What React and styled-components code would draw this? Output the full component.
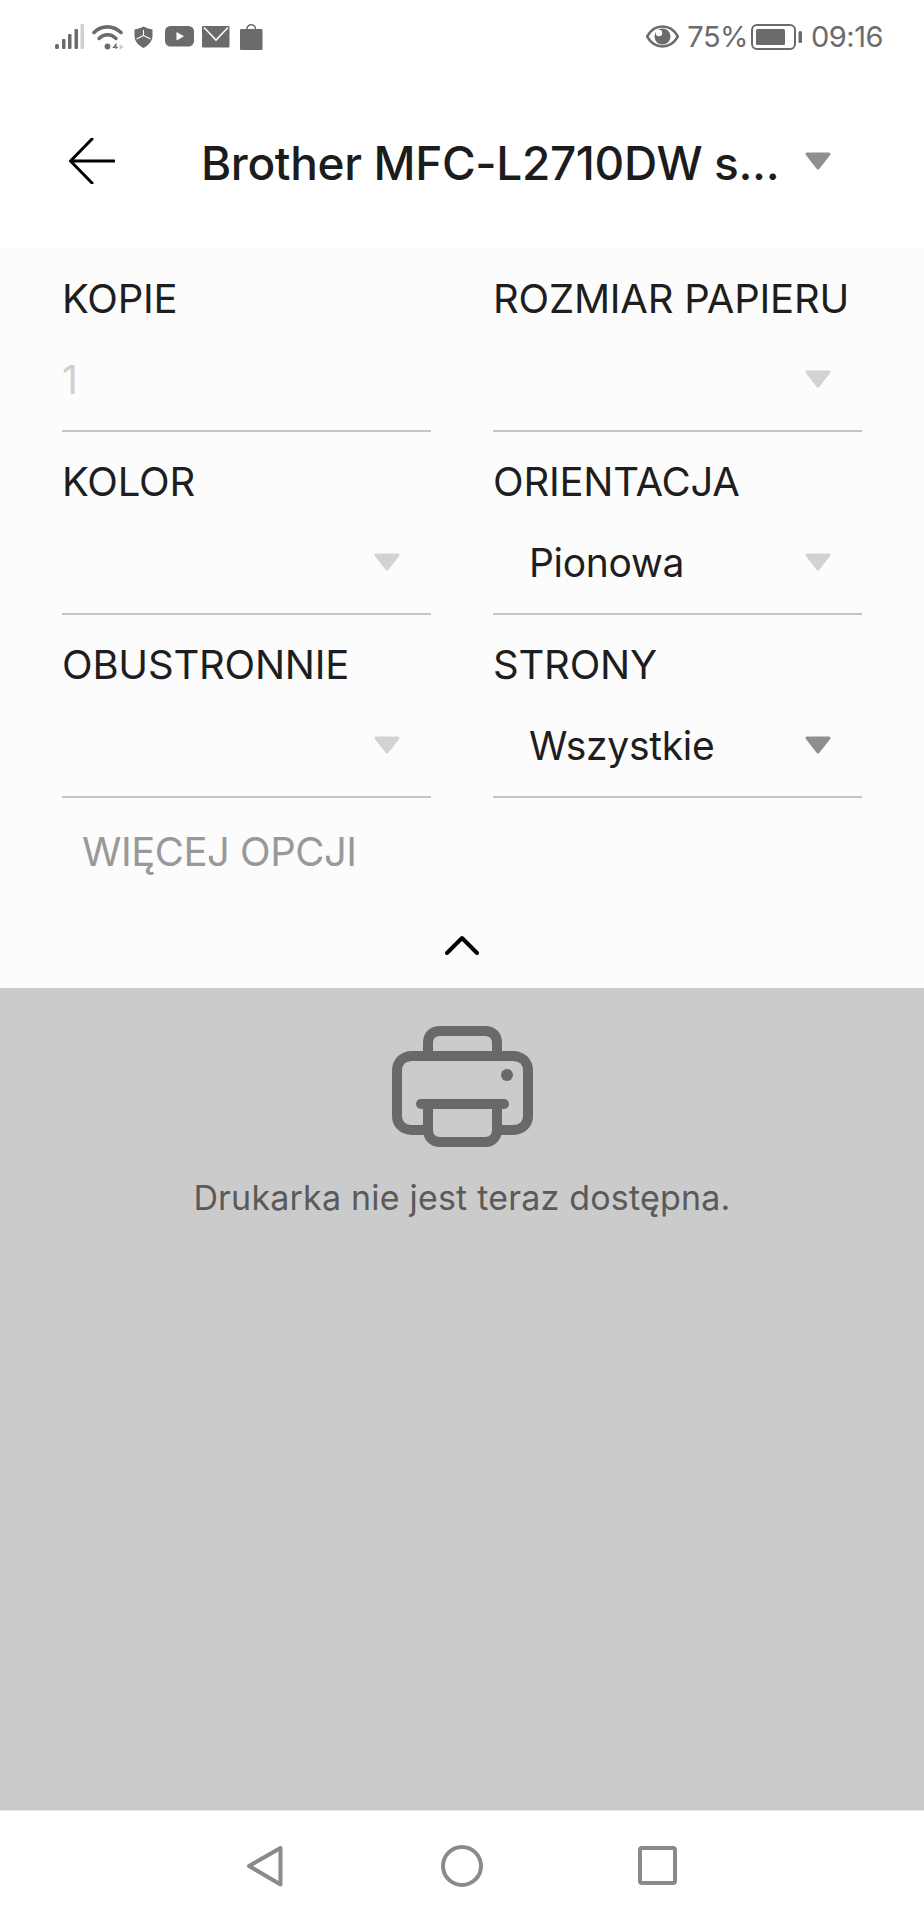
import React from 'react';
import styled, { createGlobalStyle } from 'styled-components';

const GlobalStyle = createGlobalStyle`
  html, body {
    margin: 0;
    padding: 0;
    background: #fff;
    font-family: 'Inter', 'Liberation Sans', sans-serif;
  }
`;

const Screen = styled.div`
  width: 924px;
  height: 1920px;
  display: flex;
  flex-direction: column;
  overflow: hidden;
`;

// status bar
const StatusBar = styled.div`
  height: 70px;
  flex: none;
  display: flex;
  align-items: center;
  justify-content: space-between;
  padding: 3px 41px 0 55px;
  box-sizing: border-box;
  color: #6b6b6b;
`;

const StatusGroup = styled.div`
  display: flex;
  align-items: center;
`;

const StatusGap = styled.span`
  width: ${props => props.width}px;
  flex: none;
`;

const StatusText = styled.span`
  font-size: 29px;
  letter-spacing: -0.5px;
  line-height: 1;
`;

// header
const Header = styled.div`
  height: 178px;
  flex: none;
  display: flex;
  align-items: center;
  padding: 4px 0 0 69px;
  box-sizing: border-box;
`;

const Title = styled.div`
  font-size: 46px;
  font-weight: 500;
  color: #1c1c1c;
  letter-spacing: -0.35px;
  margin: 4px 0 0 86px;
  width: 603px;
  white-space: nowrap;
`;

const ArrowMark = styled.svg`
  display: block;
  flex: none;
`;

const Arrow = ({ color = '#d2d2d2' }) => (
  <ArrowMark width="28" height="20" viewBox="0 0 28 20">
    <path d="M3 3H25L14 17Z" fill={color} stroke={color} strokeWidth="3" strokeLinejoin="round" />
  </ArrowMark>
);

// options panel
const Panel = styled.div`
  height: 740px;
  flex: none;
  background: #fcfcfc;
  padding: 1px 62px 0;
  box-sizing: border-box;
  display: flex;
  flex-direction: column;
`;

const Grid = styled.div`
  display: grid;
  grid-template-columns: 369px 369px;
  column-gap: 62px;
  grid-auto-rows: 183px;
`;

const Field = styled.div`
  display: flex;
  flex-direction: column;
  border-bottom: 2px solid #c4c4c4;
  box-sizing: border-box;
`;

const Label = styled.div`
  height: 42px;
  margin-top: 29px;
  line-height: 42px;
  font-size: 40px;
  color: #1e1e1e;
  letter-spacing: -0.2px;
  white-space: nowrap;
`;

const ValueRow = styled.div`
  margin-top: 37px;
  height: 44px;
  display: flex;
  align-items: center;
  justify-content: space-between;
  padding: 0 30px 0 ${props => (props.plain ? 0 : 36)}px;
`;

const Value = styled.span`
  font-size: 39px;
  letter-spacing: -0.3px;
  color: ${props => props.color || '#1e1e1e'};
`;

const MoreOptions = styled.div`
  margin: 31px 0 0 20px;
  height: 46px;
  line-height: 46px;
  font-size: 40px;
  color: #999;
  letter-spacing: -0.5px;
`;

const Collapse = styled.div`
  margin-top: 60px;
  display: flex;
  justify-content: center;
`;

// preview area
const Preview = styled.div`
  flex: 1;
  background: #cbcbcb;
  display: flex;
  flex-direction: column;
  align-items: center;
  padding-top: 38px;
`;

const Message = styled.div`
  margin-top: 30px;
  font-size: 34px;
  letter-spacing: 0.2px;
  color: #5a5a5a;
`;

// navigation bar
const NavBar = styled.div`
  height: 110px;
  flex: none;
  display: flex;
  align-items: center;
  padding-left: 246px;
  background: #fff;
  border-top: 1px solid #e8e8e8;
  box-sizing: border-box;
`;

const NavSpacer = styled.span`
  width: ${props => props.width}px;
  flex: none;
`;

const FIELDS = [
  { label: 'KOPIE', value: '1', plain: true, valueColor: '#cfcfcf' },
  { label: 'ROZMIAR PAPIERU' },
  { label: 'KOLOR' },
  { label: 'ORIENTACJA', value: 'Pionowa' },
  { label: 'OBUSTRONNIE' },
  { label: 'STRONY', value: 'Wszystkie', arrow: '#8f8f8f' }
];

const Icons = {
  Signal: () => (
    <svg width="29" height="26" viewBox="0 0 29 26">
      <rect x="0" y="20" width="4" height="5" rx="1.5" fill="#6b6b6b" />
      <rect x="7" y="15" width="3.5" height="10" rx="1" fill="#6b6b6b" />
      <rect x="13" y="10" width="3.5" height="15" rx="1" fill="#6b6b6b" />
      <rect x="19.5" y="5" width="3.5" height="20" rx="1" fill="#6b6b6b" />
      <rect x="25.5" y="0" width="3.5" height="25" rx="1" fill="#d0d0d0" />
    </svg>
  ),
  Wifi: () => (
    <svg width="32" height="26" viewBox="0 0 32 26" fill="none">
      <path d="M2 8.5C9.5 1 21 1 29 8.5" stroke="#6b6b6b" strokeWidth="3.6" strokeLinecap="round" />
      <path d="M7 14.5C12 9.5 19 9.5 24 14.5" stroke="#6b6b6b" strokeWidth="3.4" strokeLinecap="round" />
      <circle cx="15.5" cy="22.5" r="2.9" fill="#6b6b6b" />
      <path d="M24 25V20.5L21.5 23.5H26" stroke="#6b6b6b" strokeWidth="1.2" fill="none" />
      <path d="M27.5 20L31.5 23L27.5 26Z" fill="#c8c8c8" />
    </svg>
  ),
  Shield: () => (
    <svg width="19" height="22" viewBox="0 0 19 22">
      <path d="M0.5 3.5C3.5 3 6.5 2 9.5 0.5C12.5 2 15.5 3 18.5 3.5V10C18.5 15 14.5 19.5 9.5 22C4.5 19.5 0.5 15 0.5 10Z" fill="#6b6b6b" />
      <path d="M9.5 4V9.5M9.5 9.5L2.5 13M9.5 9.5L16.5 13" stroke="#fff" strokeWidth="1.1" fill="none" />
    </svg>
  ),
  Youtube: () => (
    <svg width="29" height="21" viewBox="0 0 29 21">
      <rect width="29" height="20.5" rx="5.5" fill="#6b6b6b" />
      <path d="M11.5 6L19 10.2L11.5 14.5Z" fill="#fff" />
    </svg>
  ),
  Mail: () => (
    <svg width="28" height="22" viewBox="0 0 28 22">
      <rect width="27.5" height="21.5" rx="1" fill="#6b6b6b" />
      <path d="M2 1.5L14 14L26 1.5" stroke="#fff" strokeWidth="1.6" fill="none" />
    </svg>
  ),
  Bag: () => (
    <svg width="23" height="26" viewBox="0 0 23 26">
      <rect y="5" width="22.5" height="21" rx="1" fill="#6b6b6b" />
      <path d="M7 6V4.5C7 2.3 9 0.8 11.2 0.8C13.4 0.8 15.4 2.3 15.4 4.5V6" stroke="#6b6b6b" strokeWidth="1.5" fill="none" />
    </svg>
  ),
  Eye: () => (
    <svg width="33" height="23" viewBox="0 0 33 23">
      <path d="M1 11.5C5 4.5 10.5 1.5 16.5 1.5C22.5 1.5 28 4.5 32 11.5C28 18.5 22.5 21.5 16.5 21.5C10.5 21.5 5 18.5 1 11.5Z" fill="none" stroke="#6b6b6b" strokeWidth="2.6" />
      <circle cx="16.5" cy="11.5" r="8" fill="#6b6b6b" />
      <circle cx="13" cy="8" r="3.2" fill="#fff" />
    </svg>
  ),
  Battery: () => (
    <svg width="51" height="26" viewBox="0 0 51 26">
      <rect x="1" y="1" width="43" height="24" rx="5" fill="none" stroke="#6b6b6b" strokeWidth="2" />
      <rect x="5" y="5" width="29" height="16" rx="1.5" fill="#6b6b6b" />
      <rect x="47.5" y="7" width="3.5" height="12" rx="1.5" fill="#6b6b6b" />
    </svg>
  ),
  Back: () => (
    <svg width="46" height="46" viewBox="0 0 46 46" fill="none">
      <path d="M45 23H2M23 1L1.5 23L23 45" stroke="#000" strokeWidth="3" strokeLinecap="round" strokeLinejoin="round" />
    </svg>
  ),
  Chevron: () => (
    <svg width="34" height="20" viewBox="0 0 34 20" fill="none">
      <path d="M2 18L17 3L32 18" stroke="#000" strokeWidth="4" strokeLinecap="round" strokeLinejoin="round" />
    </svg>
  ),
  Printer: () => (
    <svg width="141" height="121" viewBox="0 0 141 121" fill="none" stroke="#696969" strokeWidth="10">
      <path d="M36 30V17C36 9 41 5 48 5H93C100 5 105 9 105 17V30" />
      <path d="M36 104H20C11 104 5 98 5 90V45C5 36 11 30 20 30H121C130 30 136 36 136 45V90C136 98 130 104 121 104H105" />
      <path d="M36 78V104C36 111 41 116 48 116H93C100 116 105 111 105 104V78" />
      <path d="M29 78H112" strokeLinecap="round" />
      <circle cx="115" cy="49" r="6" fill="#696969" stroke="none" />
    </svg>
  ),
  NavBack: () => (
    <svg width="37" height="42" viewBox="0 0 37 42" fill="none">
      <path d="M34.5 3L3 21L34.5 39.5Z" stroke="#8a8a8a" strokeWidth="4" strokeLinejoin="round" />
    </svg>
  ),
  NavHome: () => (
    <svg width="42" height="42" viewBox="0 0 42 42" fill="none">
      <circle cx="21" cy="21" r="19" stroke="#8a8a8a" strokeWidth="4" />
    </svg>
  ),
  NavRecent: () => (
    <svg width="39" height="39" viewBox="0 0 39 39" fill="none">
      <rect x="2" y="2" width="35" height="35" rx="2" stroke="#8a8a8a" strokeWidth="4" />
    </svg>
  )
};

export default function App() {
  return (
    <Screen>
      <GlobalStyle />
      <StatusBar>
        <StatusGroup>
          <Icons.Signal />
          <StatusGap width={8} />
          <Icons.Wifi />
          <StatusGap width={10} />
          <Icons.Shield />
          <StatusGap width={12} />
          <Icons.Youtube />
          <StatusGap width={8} />
          <Icons.Mail />
          <StatusGap width={10} />
          <Icons.Bag />
        </StatusGroup>
        <StatusGroup>
          <Icons.Eye />
          <StatusGap width={8} />
          <StatusText>75%</StatusText>
          <StatusGap width={3} />
          <Icons.Battery />
          <StatusGap width={9} />
          <StatusText>09:16</StatusText>
        </StatusGroup>
      </StatusBar>

      <Header>
        <Icons.Back />
        <Title>Brother MFC-L2710DW s...</Title>
        <Arrow color="#8f8f8f" />
      </Header>

      <Panel>
        <Grid>
          {FIELDS.map(field => (
            <Field key={field.label}>
              <Label>{field.label}</Label>
              <ValueRow plain={field.plain}>
                <Value color={field.valueColor}>{field.value}</Value>
                {!field.plain && <Arrow color={field.arrow} />}
              </ValueRow>
            </Field>
          ))}
        </Grid>
        <MoreOptions>WIĘCEJ OPCJI</MoreOptions>
        <Collapse>
          <Icons.Chevron />
        </Collapse>
      </Panel>

      <Preview>
        <Icons.Printer />
        <Message>Drukarka nie jest teraz dostępna.</Message>
      </Preview>

      <NavBar>
        <Icons.NavBack />
        <NavSpacer width={158} />
        <Icons.NavHome />
        <NavSpacer width={155} />
        <Icons.NavRecent />
      </NavBar>
    </Screen>
  );
}
